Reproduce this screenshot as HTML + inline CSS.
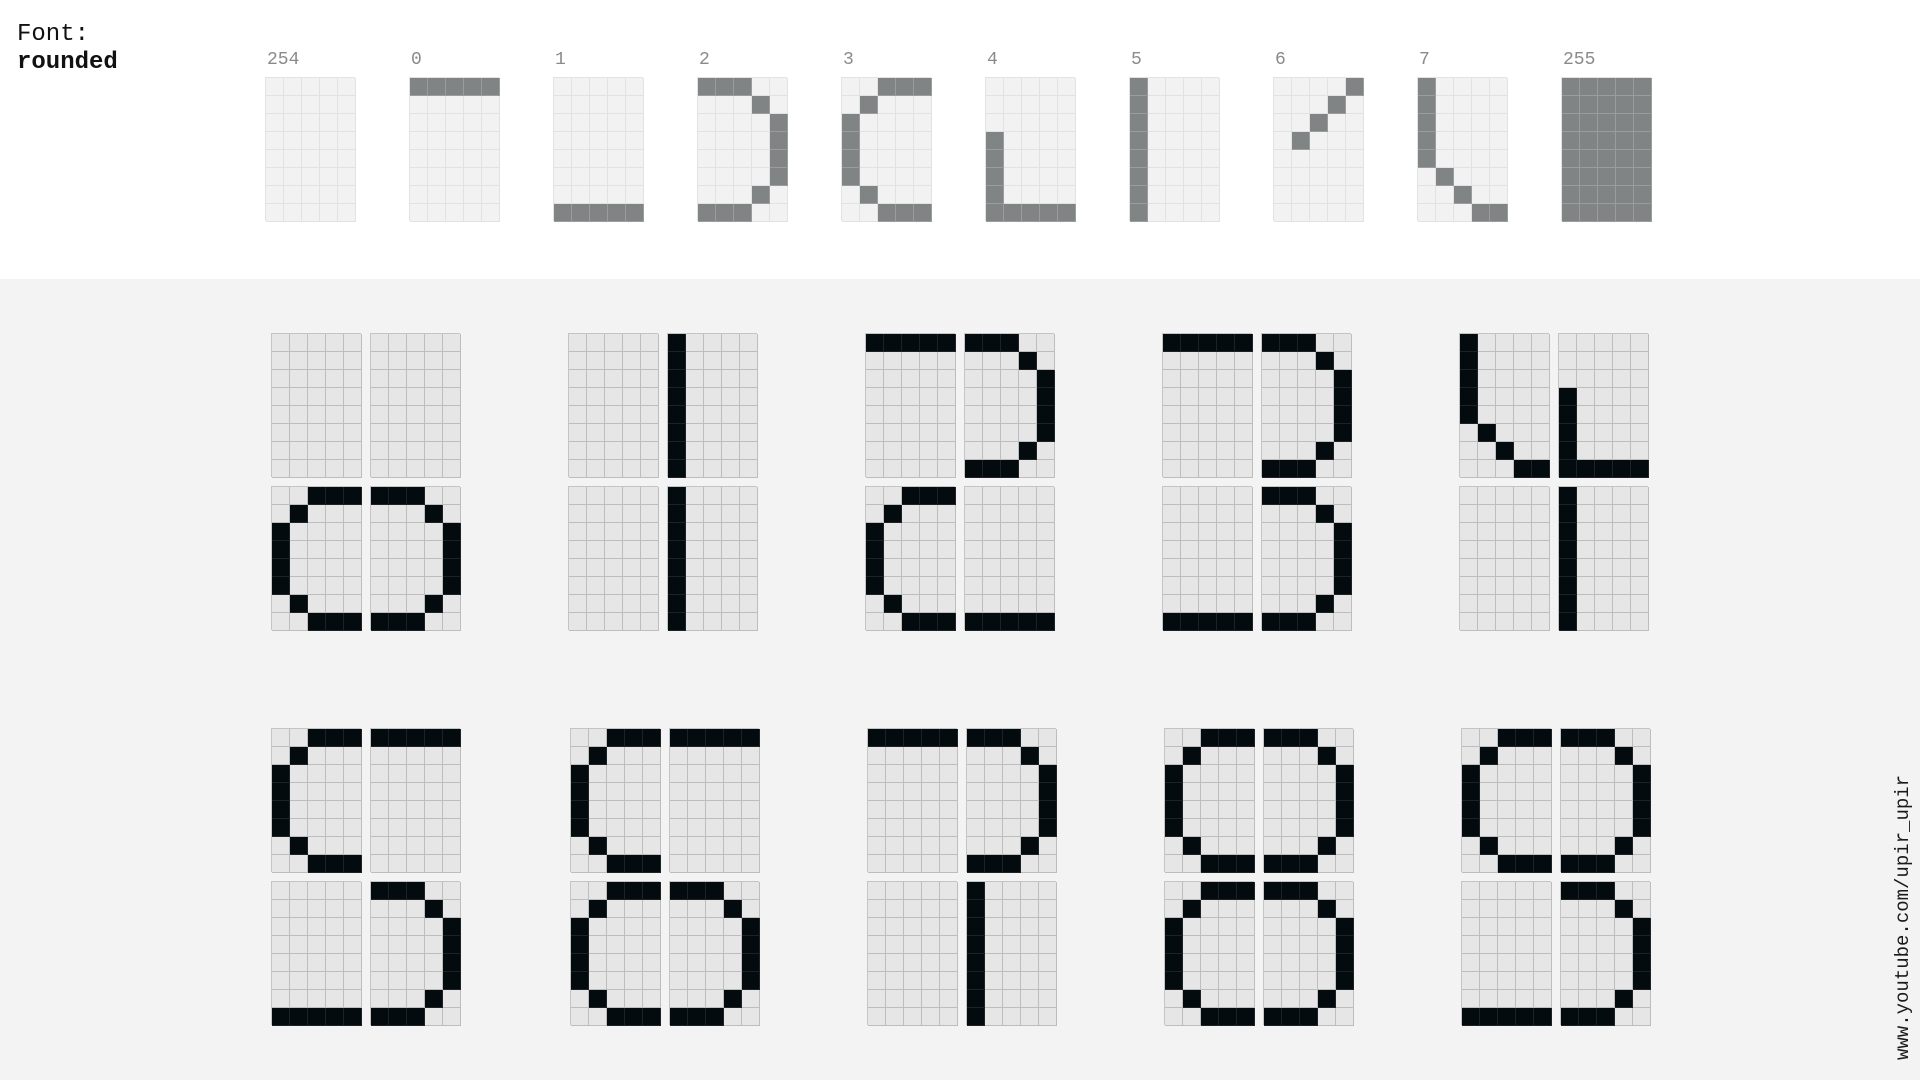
<!DOCTYPE html>
<html><head><meta charset="utf-8">
<style>
html,body{margin:0;padding:0}
body{width:1920px;height:1080px;position:relative;overflow:hidden;background:#f3f3f3;font-family:"Liberation Mono",monospace}
#topbar{position:absolute;left:0;top:0;width:1920px;height:279px;background:#fff}
.t1{position:absolute;left:17px;top:21px;font-size:24px;color:#111;line-height:28px}
.t1 b{font-weight:bold}
.lbl{position:absolute;font-size:18px;color:#8a8a8a;top:50px}
.g{position:absolute;width:90px;height:144px;display:grid;grid-template-columns:repeat(5,18px);grid-template-rows:repeat(8,18px);box-sizing:border-box}
.g div{box-sizing:border-box}
.s .c{background:#f2f2f2;border-right:1px solid #e2e2e2;border-bottom:1px solid #e2e2e2}
.s .on{background:#808484;border-right:1px solid #9a9d9d;border-bottom:1px solid #9a9d9d}
.s{border-left:1px solid #e2e2e2;border-top:1px solid #e2e2e2}
.m .c{background:#e6e6e6;border-right:1px solid #bdbdbd;border-bottom:1px solid #bdbdbd}
.m .on{background:#030b0e;border-right:1px solid #1c2225;border-bottom:1px solid #1c2225}
.m{border-left:1px solid #c4c4c4;border-top:1px solid #c4c4c4}
.url{position:absolute;left:1893px;top:1060px;transform-origin:0 0;transform:rotate(-90deg);font-size:19px;color:#1a1a1a;white-space:nowrap;line-height:20px}
</style></head><body>
<div id="topbar">
<div class="t1">Font:<br><b>rounded</b></div>
</div>
<div class="url">www.youtube.com/upir_upir</div>
<script>
(function(){
var G={
"254":[],
"0":[[0,0],[0,1],[0,2],[0,3],[0,4]],
"1":[[7,0],[7,1],[7,2],[7,3],[7,4]],
"2":[[0,0],[0,1],[0,2],[1,3],[2,4],[3,4],[4,4],[5,4],[6,3],[7,0],[7,1],[7,2]],
"3":[[0,2],[0,3],[0,4],[1,1],[2,0],[3,0],[4,0],[5,0],[6,1],[7,2],[7,3],[7,4]],
"4":[[3,0],[4,0],[5,0],[6,0],[7,0],[7,1],[7,2],[7,3],[7,4]],
"5":[[0,0],[1,0],[2,0],[3,0],[4,0],[5,0],[6,0],[7,0]],
"6":[[0,4],[1,3],[2,2],[3,1]],
"7":[[0,0],[1,0],[2,0],[3,0],[4,0],[5,1],[6,2],[7,3],[7,4]],
"255":"all"
};
function glyph(id,x,y,cls){
  var d=document.createElement('div');d.className='g '+cls;
  d.style.left=x+'px';d.style.top=y+'px';
  var pts=G[String(id)];var all=(pts==="all");var on={};
  if(!all){for(var k=0;k<pts.length;k++){on[pts[k][0]*5+pts[k][1]]=1;}}
  for(var i=0;i<40;i++){var c=document.createElement('div');
    c.className='c'+((all||on[i])?' on':'');d.appendChild(c);}
  document.body.appendChild(d);
}
var topRow=[254,0,1,2,3,4,5,6,7,255];
for(var i=0;i<topRow.length;i++){var x=265+144*i;
  var l=document.createElement('div');l.className='lbl';l.style.left=(x+2)+'px';l.textContent=String(topRow[i]);document.body.appendChild(l);
  glyph(topRow[i],x,77,'s');}
var r1=[[254,254,3,2],[254,5,254,5],[0,2,3,1],[0,2,1,2],[7,4,254,5]];
var r2=[[3,0,1,2],[3,0,3,2],[0,2,254,5],[3,2,3,2],[3,2,1,2]];
var x1=[271,568,865,1162,1459],x2=[271,570,867,1164,1461];
for(var j=0;j<5;j++){var g=r1[j];
  glyph(g[0],x1[j],333,'m');glyph(g[1],x1[j]+99,333,'m');glyph(g[2],x1[j],486,'m');glyph(g[3],x1[j]+99,486,'m');
  g=r2[j];
  glyph(g[0],x2[j],728,'m');glyph(g[1],x2[j]+99,728,'m');glyph(g[2],x2[j],881,'m');glyph(g[3],x2[j]+99,881,'m');}
})();
</script>
</body></html>
